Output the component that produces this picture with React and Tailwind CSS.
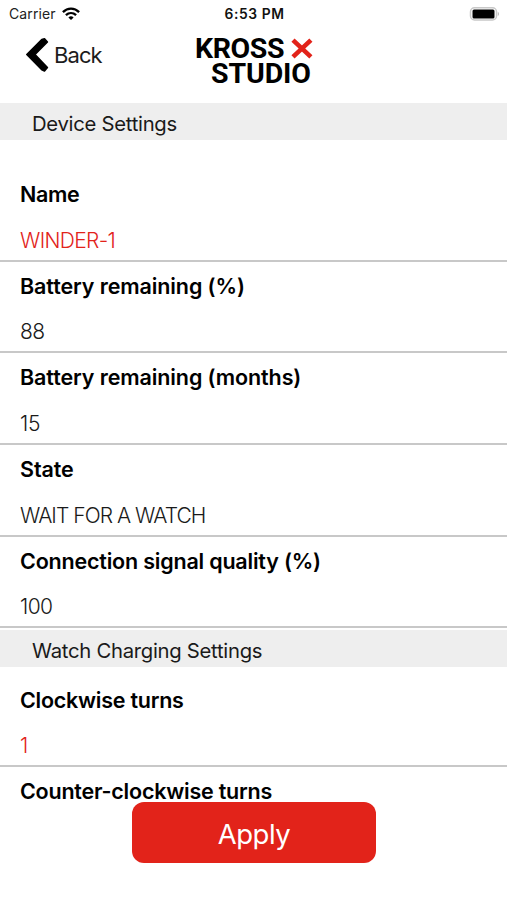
const deviceRows = [
  { label: "Name", value: "WINDER-1", editable: true, track: "tracking-[-0.35px]", valueTrack: "tracking-[-0.65px]" },
  { label: "Battery remaining (%)", value: "88", track: "tracking-[-0.1px]", valueTrack: "tracking-[-0.6px]" },
  { label: "Battery remaining (months)", value: "15", track: "tracking-[-0.1px]", valueTrack: "tracking-[-0.3px]" },
  { label: "State", value: "WAIT FOR A WATCH", track: "tracking-[-0.1px]", valueTrack: "tracking-[-0.95px]" },
  { label: "Connection signal quality (%)", value: "100", track: "tracking-[-0.2px]", valueTrack: "tracking-[-0.6px]" },
];

function StatusBar() {
  return (
    <div className="flex h-7 items-center justify-between pr-[7px] pl-[9px]">
      <div className="flex w-[120px] items-center gap-[6px]">
        <span className="text-[14px] leading-5 tracking-[0.1px] text-[#222]">Carrier</span>
        <svg width="18" height="14" viewBox="0 0 18 14" fill="none" stroke="#000" strokeWidth="2.3">
          <path d="M0.9 5.1C5.5 0.5 12.5 0.5 17.1 5.1" />
          <path d="M3.9 8.2C6.9 5.3 11.1 5.3 14.1 8.2" />
          <path d="M6.4 10.4Q9 8.2 11.6 10.4L9 13Z" fill="#000" stroke="none" />
        </svg>
      </div>
      <span className="text-[13.8px] leading-5 font-semibold tracking-[0.6px] text-[#111]">6:53 PM</span>
      <div className="flex w-[120px] justify-end">
        <svg width="31" height="15" viewBox="0 0 31 15">
          <rect x="1.5" y="0.8" width="26" height="12.2" rx="4" fill="#fff" stroke="#c8c8c8" strokeWidth="1.5" />
          <rect x="3.5" y="2.5" width="22" height="9" rx="1.5" fill="#000" />
          <path d="M28.8 4.8Q31.3 7 28.8 9.2Z" fill="#bbb" />
        </svg>
      </div>
    </div>
  );
}

function Header() {
  return (
    <header className="flex h-[75px] pl-[24px]">
      <button className="flex h-[55px] w-[171px] items-center">
        <svg width="26" height="38" viewBox="0 0 26 38" stroke="#000" strokeWidth="1.6" strokeLinejoin="round">
          <path d="M20.5 1.8L23.4 5L11 17.5L23.4 30.5L20.5 34L17.8 32.8L2.8 17.5L17.8 2.6Z" />
        </svg>
        <span className="ml-[4px] text-[22px] tracking-[-0.9px] text-[#1c1c1c]">Back</span>
      </button>
      <div className="w-[118px] pt-[7.5px] font-[Roboto] text-[28.5px] leading-[25px] font-bold">
        <div className="flex h-[25px] items-center">
          <span className="tracking-[-0.4px]">KROSS</span>
          <svg className="ml-[7px]" width="22" height="22" viewBox="0 0 22 22" stroke="#e2231a" strokeWidth="4.6">
            <path d="M2 3L20 20M20 3L2 20" />
          </svg>
        </div>
        <div className="pl-[16px] tracking-[-0.1px]">STUDIO</div>
      </div>
    </header>
  );
}

function SectionTitle({ children }) {
  return (
    <h2 className="flex h-[37px] items-center bg-[#eee] pt-[5px] pl-[32px] text-[20.3px] leading-none tracking-[-0.28px] text-[#1a1a1a]">
      {children}
    </h2>
  );
}

function Row({ label, value, editable, track, valueTrack }) {
  return (
    <div className="flex h-[91.6px] flex-col border-b-2 border-[#c8c8c8] pt-[9px] pl-[20px]">
      <span className={`h-[46.5px] text-[21.5px] leading-[30px] font-semibold text-black ${track}`}>{label}</span>
      <span className={`text-[21px] leading-[30px] font-light ${valueTrack} ${editable ? "text-[#e2231a]" : "text-[#1a1a1a]"}`}>
        {value}
      </span>
    </div>
  );
}

export default function App() {
  return (
    <div className="relative h-[900px] w-[507px] overflow-hidden bg-white font-[Inter,sans-serif]">
      <StatusBar />
      <Header />
      <SectionTitle>Device Settings</SectionTitle>
      <div className="pt-[30.3px]">
        {deviceRows.map((row) => (
          <Row key={row.label} {...row} />
        ))}
      </div>
      <div className="pt-[1.7px]">
        <SectionTitle>Watch Charging Settings</SectionTitle>
      </div>
      <div className="pt-[8.7px]">
        <Row label="Clockwise turns" value="1" editable track="tracking-[-0.25px]" valueTrack="tracking-[-0.3px]" />
        <div className="pt-[9px] pl-[20px] text-[21.5px] leading-[30px] font-semibold tracking-[-0.22px]">
          Counter-clockwise turns
        </div>
      </div>
      <button className="absolute top-[802px] left-[132px] h-[61px] w-[244px] rounded-[12px] bg-[#e2231a] pt-[4px] text-[27.5px] tracking-[-0.5px] text-white">
        Apply
      </button>
    </div>
  );
}
